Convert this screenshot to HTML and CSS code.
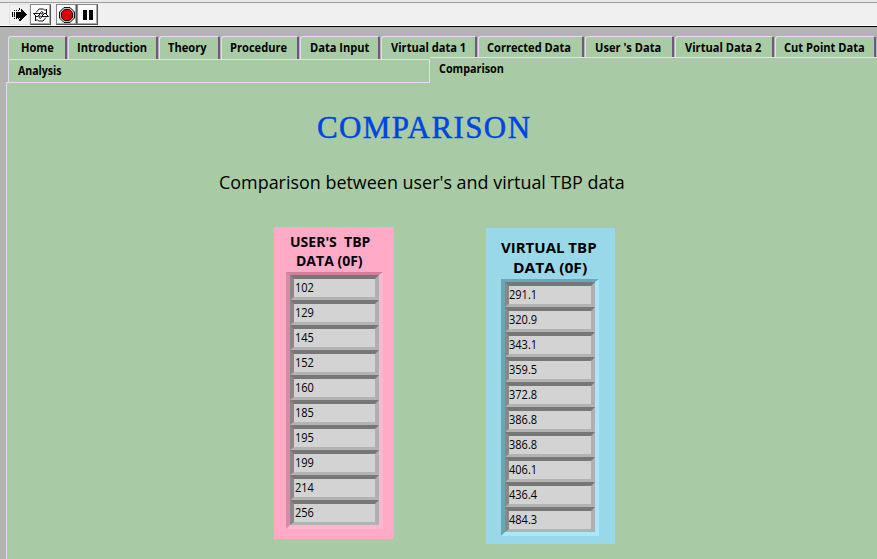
FILE: index.html
```
<!DOCTYPE html>
<html lang="en">
<head>
<meta charset="utf-8">
<title>Comparison</title>
<link rel="stylesheet" href="styles.css">
</head>
<body>
<header class="toolbar">
  <button class="tool run" aria-label="Run"><svg width="18" height="18" viewBox="0 0 18 18" shape-rendering="crispEdges"><path d="M1 6h1v5H1zM3 6h1v5H3zM5 6h5V3h1v1h1v1h1v1h1v1h1v1h1v1h-1v1h-1v1h-1v1h-1v1h-1v1h-1v1h-1v-3H5z" fill="#000"/><path d="M3 4h1v1H3zM5 4h1v1H5zM7 4h1v1H7zM3 12h1v1H3zM5 12h1v1H5zM7 12h1v1H7zM8 2h1v2H8zM8 13h1v2H8z" fill="#000"/></svg></button>
  <button class="tool raised" aria-label="Run continuously"><svg width="18" height="18" viewBox="0 0 18 18" fill="#fff" stroke="#111" stroke-linejoin="round"><path d="M4 6.500 7 3h4.500l1.500 1.500L14.500 3v5H9.500L11 6.500 9.500 5.500 8 7.500"/><path d="M14 11.500 11 15H6.500L5 13.500 3.500 15v-5h5L7 11.500l1.500 1L10 10.500"/><path d="M1.500 7.500h7L5 11z"/><path d="M9.500 10.500h7L13 7z"/></svg></button>
  <button class="tool raised stop" aria-label="Abort"><svg width="18" height="18" viewBox="0 0 18 18"><path d="M6 1.500h6L16.500 6v6L12 16.500H6L1.500 12V6z" fill="#bbb" stroke="#111"/><path d="M6.700 3.500h4.600L14.500 6.700v4.600L11.300 14.500H6.700L3.500 11.300V6.700z" fill="#e00000" stroke="#300"/></svg></button>
  <button class="tool raised" aria-label="Pause"><svg width="18" height="18" viewBox="0 0 18 18"><path d="M4 4h4v10H4zM10 4h4v10h-4z"/></svg></button>
</header>
<main class="panel">
  <nav class="tabs">
    <div class="tab t1"><span>Home</span></div>
    <div class="tab t2"><span>Introduction</span></div>
    <div class="tab t3"><span>Theory</span></div>
    <div class="tab t4"><span>Procedure</span></div>
    <div class="tab t5"><span>Data Input</span></div>
    <div class="tab t6"><span>Virtual data 1</span></div>
    <div class="tab t7"><span>Corrected Data</span></div>
    <div class="tab t8"><span>User 's Data</span></div>
    <div class="tab t9"><span>Virtual Data 2</span></div>
    <div class="tab t10"><span>Cut Point Data</span></div>
  </nav>
  <nav class="tabs-second">
    <div class="analysis"><span>Analysis</span></div>
    <div class="active"><span>Comparison</span></div>
  </nav>
  <section class="page">
    <h1><span>COMPARISON</span></h1>
    <p class="subtitle"><span>Comparison between user's and virtual TBP data</span></p>
    <div class="columns">
      <section class="card user">
        <h2><span class="line l1">USER'S&nbsp; TBP</span><span class="line l2">DATA (0F)</span></h2>
        <div class="array">
          <div class="cell"><span>102</span></div><div class="cell"><span>129</span></div>
          <div class="cell"><span>145</span></div><div class="cell"><span>152</span></div>
          <div class="cell"><span>160</span></div><div class="cell"><span>185</span></div>
          <div class="cell"><span>195</span></div><div class="cell"><span>199</span></div>
          <div class="cell"><span>214</span></div><div class="cell"><span>256</span></div>
        </div>
      </section>
      <section class="card virtual">
        <h2><span class="line l1">VIRTUAL TBP</span><span class="line l2">DATA (0F)</span></h2>
        <div class="array">
          <div class="cell"><span>291.1</span></div><div class="cell"><span>320.9</span></div>
          <div class="cell"><span>343.1</span></div><div class="cell"><span>359.5</span></div>
          <div class="cell"><span>372.8</span></div><div class="cell"><span>386.8</span></div>
          <div class="cell"><span>386.8</span></div><div class="cell"><span>406.1</span></div>
          <div class="cell"><span>436.4</span></div><div class="cell"><span>484.3</span></div>
        </div>
      </section>
    </div>
  </section>
</main>
</body>
</html>
```
FILE: styles.css
```
* { box-sizing: border-box; }
body {
  margin: 0;
  width: 877px;
  height: 559px;
  overflow: hidden;
  background: #b3b3b3;
  color: #000;
  font-family: "Open Sans", "Noto Sans", sans-serif;
}
span { display: inline-block; white-space: nowrap; transform-origin: 0 50%; }

.toolbar {
  display: flex;
  height: 27px;
  padding: 2px 0 0 9px;
  background: #f0f0f0;
  border-top: 2px solid #e8e8e8;
  border-bottom: 1px solid #000;
  box-shadow: inset 0 1px #a0a0a0, inset 0 -1px #fff;
}
.tool {
  width: 21px;
  height: 21px;
  padding: 0;
  border: 1px solid #e0e0e0;
  background: #f0f0f0;
  display: flex;
  align-items: center;
  justify-content: center;
}
.raised {
  background: #fafafa;
  border-color: #888 #555 #555 #888;
  box-shadow: inset -1px -1px #aaa;
}
.stop { margin-left: 5px; }

.panel { padding-top: 9px; }
.tabs {
  display: grid;
  grid-template-columns: 60px 91px 62px 79px 81px 97px 107px 90px 100px 102px;
  margin-left: 8px;
  height: 23px;
}
.tab {
  height: 23px;
  margin-right: 1px;
  background: #a8cba5;
  border-top: 1px solid #ecd8f4;
  border-left: 1px solid #ecd8f4;
  border-right: 2px solid #70587c;
  border-radius: 3px 2px 0 0;
  padding-left: 8px;
  font-size: 12px;
  font-weight: 700;
  line-height: 21px;
}
.tab span, .tabs-second span { transform: scaleX(.925); }
.t1 { padding-left: 12px; }
.t5, .t6, .t8, .t9 { padding-left: 9px; }

.tabs-second {
  display: flex;
  height: 23px;
  margin-left: 8px;
  font-size: 12px;
  font-weight: 700;
}
.analysis {
  width: 422px;
  background: #a8cba5;
  border-top: 1px solid #ecd8f4;
  border-left: 1px solid #ecd8f4;
  border-right: 1px solid #ecd8f4;
  padding-left: 9px;
  line-height: 22px;
}
.tabs-second .analysis span { transform: scaleX(.88); }
.active {
  flex: 1;
  height: 26px;
  margin-top: -2px;
  position: relative;
  background: #a8cba5;
  border-top: 1px solid #ecd8f4;
  padding-left: 9px;
  line-height: 22px;
}
.tabs-second .active span { transform: scaleX(.9); }
.page {
  height: 477px;
  margin-left: 6px;
  background: #a8cba5;
  border-top: 1px solid #ecd8f4;
  border-left: 1px solid #ecd8f4;
}
h1 {
  margin: 0;
  padding: 24px 0 0 310px;
  height: 81px;
  color: #0044e0;
  font: 400 31px/41px "Liberation Serif", serif;
  letter-spacing: 1.4px;
  -webkit-text-stroke: .5px #0044e0;
}
.subtitle { margin: 0; padding-left: 212px; height: 63px; font-size: 18px; line-height: 37px; }
.subtitle span { transform: scaleX(.996); }
.columns { display: flex; align-items: flex-start; gap: 92px; padding-left: 267px; }
.card { display: flex; flex-direction: column; }
.user { width: 120px; height: 312px; background: #ffabc8; padding: 5px 12px 0; }
.virtual { width: 129px; height: 316px; margin-top: 1px; background: #99d8e9; padding: 9px 15px 0; }
h2 { margin: 0; font-size: 14px; font-weight: 700; }
.line { display: block; width: max-content; }
.user .line { line-height: 19px; }
.user h2 { height: 40px; }
.user .l1 { margin-left: 4px; }
.user .l2 { margin-left: 10px; }
.virtual .line { line-height: 20px; font-size: 15px; }
.virtual h2 { height: 42px; }
.virtual .l2 { margin-left: 12px; transform: scaleX(1.04); }
.array { width: 97px; border: 4px solid; border-top-width: 3px; }
.user .array { border-color: #d17f9d #ffb6d1 #ffb6d1 #d68ba6; }
.virtual .array { width: 98px; border-color: #69a8b9 #a8e8fa #a8e8fa #68a5b5; }
.cell {
  height: 25px;
  border: 4px solid;
  border-bottom-width: 3px;
  border-color: #777 #afafaf #b3b3b3 #888;
  background: #d3d3d3;
  font-size: 12px;
  line-height: 18px;
}
.cell span { margin-left: 1px; transform: scaleX(.92); }
.virtual .cell span { margin-left: 0; }
```
